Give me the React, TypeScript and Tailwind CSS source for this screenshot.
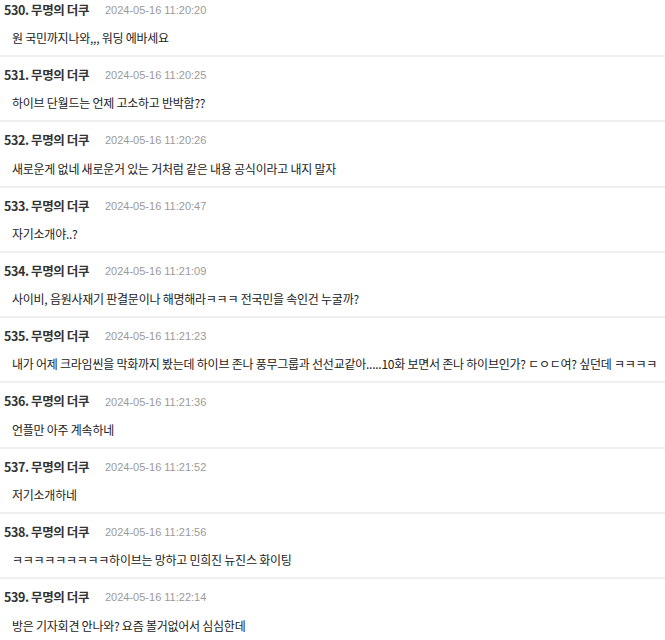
import React from "react";

type Comment = { no: number; time: string; text: string };

const comments: Comment[] = [
  { no: 530, time: "2024-05-16 11:20:20", text: "원 국민까지나와,,, 워딩 에바세요" },
  { no: 531, time: "2024-05-16 11:20:25", text: "하이브 단월드는 언제 고소하고 반박함??" },
  { no: 532, time: "2024-05-16 11:20:26", text: "새로운게 없네 새로운거 있는 거처럼 같은 내용 공식이라고 내지 말자" },
  { no: 533, time: "2024-05-16 11:20:47", text: "자기소개야..?" },
  { no: 534, time: "2024-05-16 11:21:09", text: "사이비, 음원사재기 판결문이나 해명해라ㅋㅋㅋ 전국민을 속인건 누굴까?" },
  {
    no: 535,
    time: "2024-05-16 11:21:23",
    text: "내가 어제 크라임씬을 막화까지 봤는데 하이브 존나 풍무그룹과 선선교같아.....10화 보면서 존나 하이브인가? ㄷㅇㄷ여? 싶던데 ㅋㅋㅋㅋ",
  },
  { no: 536, time: "2024-05-16 11:21:36", text: "언플만 아주 계속하네" },
  { no: 537, time: "2024-05-16 11:21:52", text: "저기소개하네" },
  { no: 538, time: "2024-05-16 11:21:56", text: "ㅋㅋㅋㅋㅋㅋㅋㅋㅋ하이브는 망하고 민희진 뉴진스 화이팅" },
  { no: 539, time: "2024-05-16 11:22:14", text: "방은 기자회견 안나와? 요즘 볼거없어서 심심한데" },
];

const CommentRow = ({ c }: { c: Comment }) => {
  return (
    <div className="border-b-2 border-[#efefef] pt-[9.3px] pb-[8px]">
      <div className="flex items-center h-[18px] pl-[4px]">
        <span className="text-[12.5px] font-bold text-[#333] tracking-[-0.4px] font-['Noto_Sans_CJK_KR',sans-serif]">
          {c.no}. 무명의 더쿠
        </span>
        <span className="ml-[16px] text-[11px] text-[#9a9a9a] font-['Liberation_Sans','Noto_Sans_CJK_KR',sans-serif]">
          {c.time}
        </span>
      </div>
      <p className="mt-[10px] h-[18px] leading-[18px] pl-[12px] text-[12px] tracking-[-0.25px] text-[#222] whitespace-nowrap font-['Noto_Sans_CJK_KR',sans-serif]">
        {c.text}
      </p>
    </div>
  );
};

export default function App() {
  return (
    <div className="w-[665px] h-[640px] overflow-hidden bg-white">
      <div className="-mt-[8.3px]">
        {comments.map((c) => (
          <CommentRow key={c.no} c={c} />
        ))}
      </div>
    </div>
  );
}
